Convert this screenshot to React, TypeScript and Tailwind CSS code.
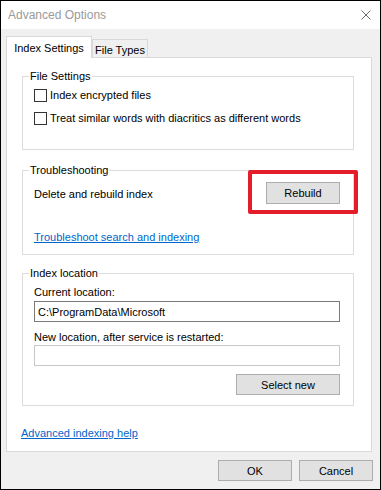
import React from "react";

function Checkbox({ label, className = "" }: { label: string; className?: string }) {
  return (
    <div className={`flex h-[16px] items-center ${className}`}>
      <div className="h-[13px] w-[13px] border border-[#333333] bg-white" />
      <span className="ml-[3px]">{label}</span>
    </div>
  );
}

function Btn({ label, w }: { label: string; w: string }) {
  return (
    <div className={`flex h-[21px] ${w} items-center justify-center border border-[#adadad] bg-[#e1e1e1] text-black`}>
      {label}
    </div>
  );
}

export default function App() {
  return (
    <div
      className="relative flex h-[490px] w-[381px] flex-col border border-black bg-[#f0f0f0] text-[11px] leading-[14px] text-black"
      style={{ fontFamily: '"Liberation Sans", Arial, sans-serif' }}
    >
      {/* Title bar */}
      <div className="flex h-[28px] items-center justify-between bg-white pl-[7px] pr-[9px]">
        <span className="text-[12px] text-[#9a9a9a]">Advanced Options</span>
        <svg width="10" height="10" viewBox="0 0 10 10">
          <path d="M0.5 0.5 L9.5 9.5 M9.5 0.5 L0.5 9.5" stroke="#6a6a6a" strokeWidth="1" fill="none" />
        </svg>
      </div>

      {/* Body */}
      <div className="flex flex-1 flex-col pl-[5px] pr-[8px] pt-[7px] pb-[8px]">
        {/* Tabs */}
        <div className="flex h-[21px] items-end">
          <div className="relative z-10 -mb-px flex h-[22px] w-[86px] items-center justify-center border-x border-t border-[#d9d9d9] bg-white">
            Index Settings
          </div>
          <div className="flex h-[18px] w-[56px] items-center justify-center border-x border-t border-[#d9d9d9] bg-[#f0f0f0] pt-[2px]">
            File Types
          </div>
        </div>

        {/* Panel */}
        <div className="flex flex-col border border-[#d9d9d9] bg-white pb-[11px]">
          <fieldset className="ml-[15px] mr-[17px] mt-[11px] border border-[#dcdcdc] pl-[11px] pr-[13px] pt-[4px] pb-[23px]">
            <legend className="-ml-[5px] px-px leading-[14px]">File Settings</legend>
            <Checkbox label="Index encrypted files" />
            <Checkbox label="Treat similar words with diacritics as different words" className="mt-[7px]" />
          </fieldset>

          <fieldset className="ml-[15px] mr-[17px] mt-[13px] border border-[#dcdcdc] pl-[11px] pr-[13px] pt-[5px] pb-[10px]">
            <legend className="-ml-[5px] px-px leading-[14px]">Troubleshooting</legend>
            <div className="flex h-[22px] items-center justify-between">
              <span className="pt-px">Delete and rebuild index</span>
              <div className="flex h-[22px] w-[74px] items-center justify-center border border-[#adadad] bg-[#e1e1e1]">
                Rebuild
              </div>
            </div>
            <div className="mt-[26px] text-[#0066cc] underline">Troubleshoot search and indexing</div>
          </fieldset>

          <fieldset className="ml-[15px] mr-[17px] mt-[11px] flex flex-col border border-[#dcdcdc] pl-[11px] pr-[13px] pt-[5px] pb-[10px]">
            <legend className="-ml-[5px] px-px leading-[14px]">Index location</legend>
            <div>Current location:</div>
            <div className="mt-[2px] flex h-[21px] items-center border border-[#7a7a7a] bg-white pl-[3px]">
              C:\ProgramData\Microsoft
            </div>
            <div className="mt-[8px]">New location, after service is restarted:</div>
            <div className="mt-px h-[21px] border border-[#c8c8c8] bg-white" />
            <div className="mt-[8px] flex justify-end">
              <Btn label="Select new" w="w-[104px]" />
            </div>
          </fieldset>

          <div className="ml-[14px] mt-[20px] text-[#0066cc] underline">Advanced indexing help</div>
        </div>

        {/* Footer buttons */}
        <div className="mt-[8px] flex justify-end gap-[7px]">
          <Btn label="OK" w="w-[74px]" />
          <div className="-mr-px">
            <Btn label="Cancel" w="w-[74px]" />
          </div>
        </div>
      </div>

      {/* Red highlight annotation */}
      <div className="pointer-events-none absolute left-[247px] top-[169px] h-[44px] w-[110px] rounded-[2px] border-4 border-[#e31e2a]" />
    </div>
  );
}
